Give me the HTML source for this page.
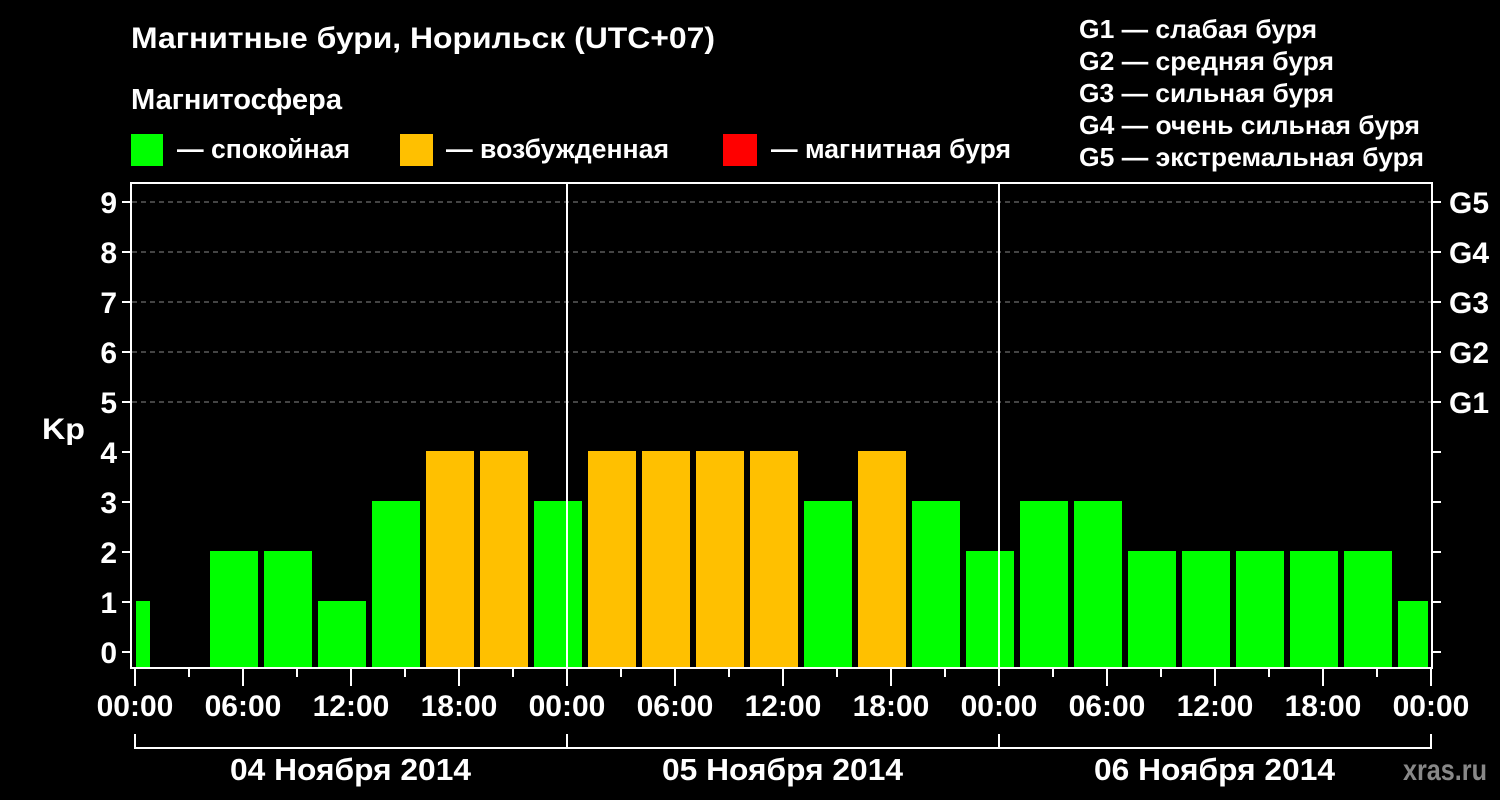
<!DOCTYPE html>
<html><head><meta charset="utf-8"><style>
html,body{margin:0;padding:0;background:#000;}
svg{display:block}
text{font-family:"Liberation Sans",sans-serif;font-weight:bold;fill:#fff}
</style></head><body>
<svg width="1500" height="800" xmlns="http://www.w3.org/2000/svg">
<rect width="1500" height="800" fill="#000"/>
<text x="131" y="48" font-size="30" textLength="584" lengthAdjust="spacingAndGlyphs">Магнитные бури, Норильск (UTC+07)</text>
<text x="131" y="109" font-size="29" textLength="211" lengthAdjust="spacingAndGlyphs">Магнитосфера</text>
<rect x="131" y="134" width="32" height="32" fill="#00ff00"/>
<text x="177" y="158" font-size="27" textLength="173" lengthAdjust="spacingAndGlyphs">— спокойная</text>
<rect x="400" y="134" width="33" height="32" fill="#ffc000"/>
<text x="446" y="158" font-size="27" textLength="223" lengthAdjust="spacingAndGlyphs">— возбужденная</text>
<rect x="723" y="134" width="34" height="32" fill="#ff0000"/>
<text x="771" y="158" font-size="27" textLength="240" lengthAdjust="spacingAndGlyphs">— магнитная буря</text>
<g font-size="26">
<text x="1079" y="38" textLength="238" lengthAdjust="spacingAndGlyphs">G1 — слабая буря</text>
<text x="1079" y="70" textLength="255" lengthAdjust="spacingAndGlyphs">G2 — средняя буря</text>
<text x="1079" y="102" textLength="255" lengthAdjust="spacingAndGlyphs">G3 — сильная буря</text>
<text x="1079" y="134" textLength="341" lengthAdjust="spacingAndGlyphs">G4 — очень сильная буря</text>
<text x="1079" y="166" textLength="345" lengthAdjust="spacingAndGlyphs">G5 — экстремальная буря</text>
</g>
<g stroke="#888" stroke-width="1" stroke-dasharray="5,4">
<line x1="132" y1="202" x2="1431" y2="202"/><line x1="132" y1="252" x2="1431" y2="252"/>
<line x1="132" y1="302" x2="1431" y2="302"/><line x1="132" y1="352" x2="1431" y2="352"/>
<line x1="132" y1="402" x2="1431" y2="402"/>
</g>
<g>
<rect x="136" y="601" width="14" height="67" fill="#00ff00"/>
<rect x="210" y="551" width="48" height="117" fill="#00ff00"/>
<rect x="264" y="551" width="48" height="117" fill="#00ff00"/>
<rect x="318" y="601" width="48" height="67" fill="#00ff00"/>
<rect x="372" y="501" width="48" height="167" fill="#00ff00"/>
<rect x="426" y="451" width="48" height="217" fill="#ffc000"/>
<rect x="480" y="451" width="48" height="217" fill="#ffc000"/>
<rect x="534" y="501" width="48" height="167" fill="#00ff00"/>
<rect x="588" y="451" width="48" height="217" fill="#ffc000"/>
<rect x="642" y="451" width="48" height="217" fill="#ffc000"/>
<rect x="696" y="451" width="48" height="217" fill="#ffc000"/>
<rect x="750" y="451" width="48" height="217" fill="#ffc000"/>
<rect x="804" y="501" width="48" height="167" fill="#00ff00"/>
<rect x="858" y="451" width="48" height="217" fill="#ffc000"/>
<rect x="912" y="501" width="48" height="167" fill="#00ff00"/>
<rect x="966" y="551" width="48" height="117" fill="#00ff00"/>
<rect x="1020" y="501" width="48" height="167" fill="#00ff00"/>
<rect x="1074" y="501" width="48" height="167" fill="#00ff00"/>
<rect x="1128" y="551" width="48" height="117" fill="#00ff00"/>
<rect x="1182" y="551" width="48" height="117" fill="#00ff00"/>
<rect x="1236" y="551" width="48" height="117" fill="#00ff00"/>
<rect x="1290" y="551" width="48" height="117" fill="#00ff00"/>
<rect x="1344" y="551" width="48" height="117" fill="#00ff00"/>
<rect x="1398" y="601" width="30" height="67" fill="#00ff00"/>
</g>
<g stroke="#fff" stroke-width="2" fill="none">
<rect x="131" y="183" width="1301" height="485"/>
<line x1="567" y1="183" x2="567" y2="668"/>
<line x1="999" y1="183" x2="999" y2="668"/>
<path d="M122 202H131M122 252H131M122 302H131M122 352H131M122 402H131M122 452H131M122 502H131M122 552H131M122 602H131M122 652H131"/>
<path d="M1432 202H1441M1432 252H1441M1432 302H1441M1432 352H1441M1432 402H1441M1432 452H1441M1432 502H1441M1432 552H1441M1432 602H1441M1432 652H1441"/>
<path d="M135 669V686M243 669V686M351 669V686M459 669V686M567 669V686M675 669V686M783 669V686M891 669V686M999 669V686M1107 669V686M1215 669V686M1323 669V686M1431 669V686"/>
<path d="M189 669V677M297 669V677M405 669V677M513 669V677M621 669V677M729 669V677M837 669V677M945 669V677M1053 669V677M1161 669V677M1269 669V677M1377 669V677"/>
<path d="M135 734V748H1431V734M567 734V748M999 734V748"/>
</g>
<g font-size="30" text-anchor="end">
<text x="117" y="213">9</text><text x="117" y="263">8</text><text x="117" y="313">7</text>
<text x="117" y="363">6</text><text x="117" y="413">5</text><text x="117" y="463">4</text>
<text x="117" y="513">3</text><text x="117" y="563">2</text><text x="117" y="613">1</text>
<text x="117" y="663">0</text>
</g>
<text x="42" y="439" font-size="30" textLength="43" lengthAdjust="spacingAndGlyphs">Kp</text>
<g font-size="30">
<text x="1449" y="213">G5</text><text x="1449" y="263">G4</text><text x="1449" y="313">G3</text>
<text x="1449" y="363">G2</text><text x="1449" y="413">G1</text>
</g>
<g font-size="30" text-anchor="middle">
<text x="135" y="716">00:00</text><text x="243" y="716">06:00</text><text x="351" y="716">12:00</text>
<text x="459" y="716">18:00</text><text x="567" y="716">00:00</text><text x="675" y="716">06:00</text>
<text x="783" y="716">12:00</text><text x="891" y="716">18:00</text><text x="999" y="716">00:00</text>
<text x="1107" y="716">06:00</text><text x="1215" y="716">12:00</text><text x="1323" y="716">18:00</text>
<text x="1431" y="716">00:00</text>
</g>
<g font-size="31">
<text x="230" y="780" textLength="241" lengthAdjust="spacingAndGlyphs">04 Ноября 2014</text>
<text x="662" y="780" textLength="241" lengthAdjust="spacingAndGlyphs">05 Ноября 2014</text>
<text x="1094" y="780" textLength="241" lengthAdjust="spacingAndGlyphs">06 Ноября 2014</text>
</g>
<text x="1403" y="780" font-size="30" textLength="84" lengthAdjust="spacingAndGlyphs" style="fill:#888">xras.ru</text>
</svg>
</body></html>
